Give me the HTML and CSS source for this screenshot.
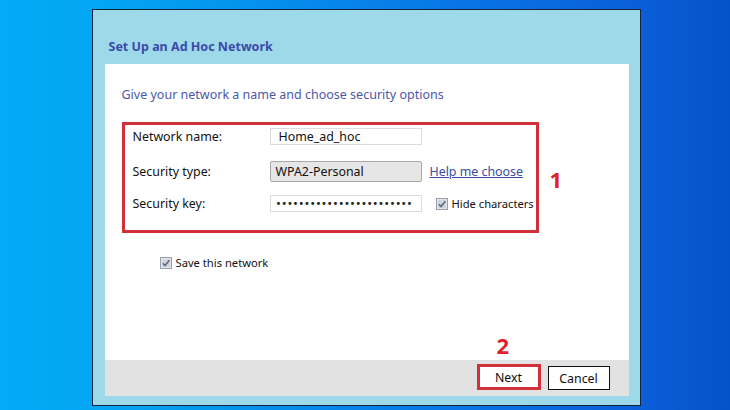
FILE: index.html
```html
<!DOCTYPE html>
<html lang="en">
<head>
  <meta charset="UTF-8">
  <meta name="viewport" content="width=device-width, initial-scale=1.0">
  <title>Set Up an Ad Hoc Network</title>
  <link rel="stylesheet" href="styles.css">
</head>
<body>
  <div class="window">
    <div class="window-title">Set Up an Ad Hoc Network</div>

    <div class="panel">
      <div class="content">
        <h1 class="heading">Give your network a name and choose security options</h1>

        <!-- 赤枠で囲まれた入力欄 -->
        <div class="fields">
          <div class="row row-name">
            <span class="label">Network name:</span>
            <div class="textbox">Home_ad_hoc</div>
          </div>
          <div class="row row-type">
            <span class="label">Security type:</span>
            <div class="dropdown">WPA2-Personal</div>
            <a class="link" href="#">Help me choose</a>
          </div>
          <div class="row row-key">
            <span class="label">Security key:</span>
            <div class="textbox dots">••••••••••••••••••••••••</div>
            <label class="check check-hide">
              <svg class="checkbox" width="12" height="12" viewBox="0 0 12 12">
                <rect x="0.5" y="0.5" width="11" height="11" fill="#e4e6ea" stroke="#9aa0a8"/>
                <rect x="2" y="2" width="8" height="8" fill="#d2d6dc"/>
                <path d="M2.8 6.2 L5 8.6 L9.4 3.2" fill="none" stroke="#5a6a88" stroke-width="1.6"/>
              </svg>
              Hide characters
            </label>
          </div>
          <span class="marker marker-1">1</span>
        </div>

        <label class="check check-save">
          <svg class="checkbox" width="12" height="12" viewBox="0 0 12 12">
            <rect x="0.5" y="0.5" width="11" height="11" fill="#e4e6ea" stroke="#9aa0a8"/>
            <rect x="2" y="2" width="8" height="8" fill="#d2d6dc"/>
            <path d="M2.8 6.2 L5 8.6 L9.4 3.2" fill="none" stroke="#5a6a88" stroke-width="1.6"/>
          </svg>
          Save this network
        </label>
      </div>

      <div class="footer">
        <span class="marker marker-2">2</span>
        <button class="btn btn-next">Next</button>
        <button class="btn btn-cancel">Cancel</button>
      </div>
    </div>
  </div>
</body>
</html>
```

FILE: styles.css
```css
/* デスクトップの背景 */
body {
  margin: 0;
  height: 410px;
  overflow: hidden;
  background: linear-gradient(90deg, #03aaf5 0%, #03a6f2 14%, #0878e6 60%, #0a5ed8 88%, #0652c8 100%);
  font-family: "Noto Sans", "Open Sans", sans-serif;
  display: flex;
  justify-content: center;
  padding-top: 9px;
  box-sizing: border-box;
}

/* ウィンドウ */
.window {
  width: 549px;
  height: 397px;
  box-sizing: border-box;
  border: 1px solid #15233a;
  background-color: #9ed9ea;
  display: flex;
  flex-direction: column;
  margin-left: 2px;
}

.window-title {
  height: 54px;
  box-sizing: border-box;
  padding: 28px 0 0 16px;
  font-size: 12.5px;
  font-weight: bold;
  color: #3b4aa8;
  line-height: 18px;
}

/* 白いパネル */
.panel {
  flex: 1;
  margin: 0 11px 9px 12px;
  background-color: #fff;
  display: flex;
  flex-direction: column;
}

.content {
  flex: 1;
  padding: 0 0 0 17px;
}

.heading {
  margin: 22px 0 0;
  font-size: 12.5px;
  font-weight: normal;
  color: #4b58a6;
  line-height: 18px;
}

/* 赤枠 */
.fields {
  position: relative;
  width: 417px;
  box-sizing: border-box;
  margin-top: 18px;
  border: 3px solid #d2313b;
  padding: 3px 0 18px 8px;
}

.row {
  display: flex;
  align-items: center;
  white-space: nowrap;
}

.row-type {
  margin-top: 16px;
  height: 21px;
}

.row-key {
  margin-top: 13px;
  height: 17px;
}

.row-name {
  height: 17px;
}

.label {
  width: 137px;
  flex-shrink: 0;
  font-size: 12.4px;
  color: #111;
}

.textbox {
  width: 152px;
  flex-shrink: 0;
  height: 17px;
  box-sizing: border-box;
  border: 1px solid #dcdcdc;
  padding-left: 8px;
  font-size: 12.4px;
  line-height: 15px;
  color: #111;
}

.dots {
  padding-left: 5px;
  font-size: 10px;
  letter-spacing: -0.2px;
  color: #222;
  font-family: "DejaVu Sans", sans-serif;
}

.dropdown {
  width: 152px;
  flex-shrink: 0;
  height: 21px;
  box-sizing: border-box;
  border: 1px solid #a8a8a8;
  border-radius: 2px;
  background-color: #e6e6e6;
  padding-left: 5px;
  font-size: 12.4px;
  line-height: 19px;
  color: #111;
}

.link {
  margin-left: 8px;
  font-size: 12.4px;
  color: #3a4c9e;
  text-decoration: underline;
}

.check {
  display: flex;
  align-items: center;
  gap: 4px;
  font-size: 11.2px;
  color: #111;
  white-space: nowrap;
}

.check-hide {
  margin-left: 14px;
}

.check-save {
  margin: 22px 0 0 38px;
}

/* 注釈の数字 */
.marker {
  position: absolute;
  font-size: 22px;
  font-weight: bold;
  color: #e0202a;
  line-height: 22px;
}

.marker-1 {
  left: 425px;
  top: 43px;
}

/* フッター */
.footer {
  position: relative;
  height: 36px;
  background-color: #e2e2e2;
  display: flex;
  justify-content: flex-end;
  align-items: flex-end;
  padding: 0 19px 6px 0;
  box-sizing: border-box;
  gap: 7px;
}

.marker-2 {
  left: 392px;
  top: -26px;
}

.btn {
  font-family: "Noto Sans", "Open Sans", sans-serif;
  font-size: 12.4px;
  color: #111;
  background-color: #fff;
  padding: 0;
  box-sizing: border-box;
}

.btn-next {
  width: 64px;
  height: 26px;
  border: 3px solid #d2313b;
}

.btn-cancel {
  width: 62px;
  height: 24px;
  border: 1px solid #111;
}
```
